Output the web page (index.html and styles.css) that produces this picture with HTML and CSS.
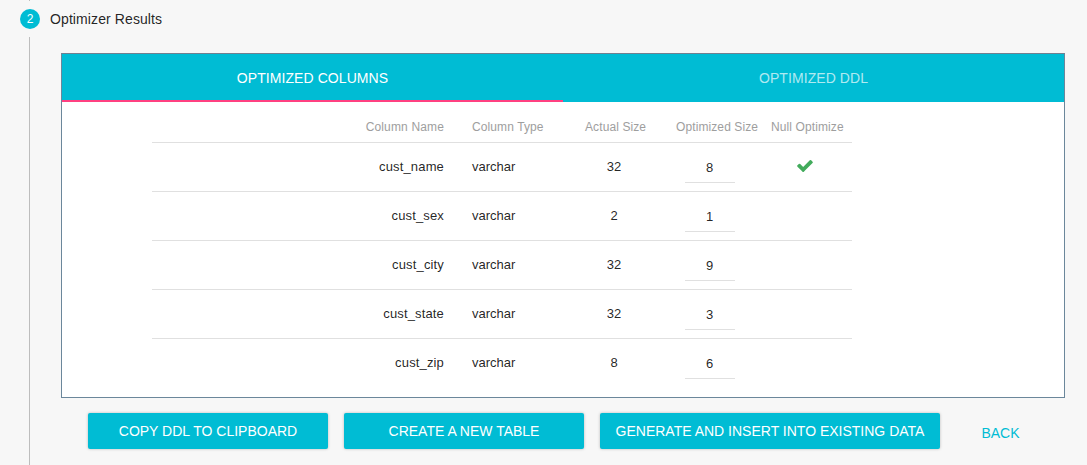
FILE: index.html
```html
<!DOCTYPE html>
<html lang="en">
<head>
<meta charset="utf-8">
<title>Optimizer Results</title>
<link rel="stylesheet" href="styles.css">
</head>
<body>
<div class="stepper">
  <div class="connector connector-top"></div>
  <header class="step">
    <span class="step-number">2</span>
    <span class="step-label">Optimizer Results</span>
  </header>
  <main class="step-content">
    <section class="card">
      <nav class="tabs">
        <div class="tab active">OPTIMIZED COLUMNS</div>
        <div class="tab">OPTIMIZED DDL</div>
      </nav>
      <div class="table">
        <div class="row head"><span class="name">Column Name</span><span class="type">Column Type</span><span class="size">Actual Size</span><span class="opt">Optimized Size</span><span class="null">Null Optimize</span></div>
        <div class="row"><span class="name">cust_name</span><span class="type">varchar</span><span class="size">32</span><span class="opt"><span class="field">8</span></span><span class="null"><svg class="check" viewBox="0 0 1550 1188"><path fill="#42ab5c" d="M1550 232q0 40-28 68L798 1024l-136 136q-28 28-68 28t-68-28L390 1024 28 662Q0 634 0 594t28-68l136-136q28-28 68-28t68 28l294 295 656-657q28-28 68-28t68 28l136 136q28 28 28 68z"/></svg></span></div>
        <div class="row"><span class="name">cust_sex</span><span class="type">varchar</span><span class="size">2</span><span class="opt"><span class="field">1</span></span><span class="null"></span></div>
        <div class="row"><span class="name">cust_city</span><span class="type">varchar</span><span class="size">32</span><span class="opt"><span class="field">9</span></span><span class="null"></span></div>
        <div class="row"><span class="name">cust_state</span><span class="type">varchar</span><span class="size">32</span><span class="opt"><span class="field">3</span></span><span class="null"></span></div>
        <div class="row"><span class="name">cust_zip</span><span class="type">varchar</span><span class="size">8</span><span class="opt"><span class="field">6</span></span><span class="null"></span></div>
      </div>
    </section>
    <div class="actions">
      <button class="btn">COPY DDL TO CLIPBOARD</button>
      <button class="btn">CREATE A NEW TABLE</button>
      <button class="btn wide">GENERATE AND INSERT INTO EXISTING DATA</button>
      <button class="back">BACK</button>
    </div>
  </main>
</div>
</body>
</html>
```

FILE: styles.css
```css
* { box-sizing: border-box; }
body {
  margin: 0;
  background: #f7f7f7;
  font-family: "Liberation Sans", Arial, sans-serif;
  color: rgba(0, 0, 0, 0.87);
}
.stepper { height: 465px; overflow: hidden; }
.connector-top { width: 1px; height: 1px; margin-left: 29px; background: #bdbdbd; }
.step {
  display: flex;
  align-items: center;
  gap: 10px;
  height: 36px;
  padding-left: 20px;
  font-size: 14px;
}
.step-number {
  width: 20px;
  height: 20px;
  border-radius: 50%;
  background: #00bcd4;
  color: #fff;
  font-size: 12px;
  line-height: 20px;
  text-align: center;
}
.step-label { letter-spacing: 0.1px; }
.step-content {
  height: 428px;
  margin-left: 29px;
  border-left: 1px solid #bdbdbd;
  padding: 16px 22px 0 31px;
}
.card { height: 345px; border: 1px solid #6b879b; border-top-color: #708090; background: #fff; }
.tabs { display: flex; height: 48px; background: #00bcd4; }
.tab {
  flex: 1;
  border-bottom: 2px solid transparent;
  padding-top: 1px;
  color: rgba(255, 255, 255, 0.7);
  font-size: 14px;
  line-height: 46px;
  letter-spacing: 0.07px;
  text-align: center;
}
.tab.active { color: #fff; border-bottom-color: #ff4081; }
.table { width: 700px; margin-left: 90px; }
.row {
  display: grid;
  grid-template-columns: 292px 100px 97px 109px 102px;
  height: 49px;
  border-bottom: 1px solid #e0e0e0;
  font-size: 13px;
  line-height: 48px;
}
.row:last-child { border-bottom: 0; }
.row.head {
  height: 41px;
  padding-top: 1px;
  color: #9e9e9e;
  font-size: 12px;
  line-height: 48px;
  letter-spacing: 0.1px;
}
.name { text-align: right; letter-spacing: 0.15px; }
.type { padding-left: 28px; }
.size { padding-left: 43px; text-align: center; }
.size, .opt, .null { white-space: nowrap; }
.opt { padding-left: 44px; }
.head .opt { padding-left: 35px; }
.null { padding-left: 47px; }
.head .null { padding-left: 21px; }
.head .size { padding-left: 41px; }
.field {
  display: block;
  width: 50px;
  height: 40px;
  border-bottom: 1px solid #e0e0e0;
  padding: 1px 1px 0 0;
  text-align: center;
}
.check { display: block; width: 16px; height: 12px; margin-top: 17px; }
.actions { display: flex; gap: 16px; padding: 15px 0 0 27px; }
.btn, .back {
  width: 240px;
  height: 36px;
  border: 0;
  padding: 0;
  font: 14px/36px "Liberation Sans", Arial, sans-serif;
}
.btn {
  border-radius: 2px;
  background: #00bcd4;
  color: #fff;
  box-shadow: 0 0 3px rgba(0, 0, 0, 0.25);
}
.wide { width: 340px; }
.back { width: 88px; margin: 2px 0 0; padding-left: 1px; background: transparent; color: #00bcd4; }
```
